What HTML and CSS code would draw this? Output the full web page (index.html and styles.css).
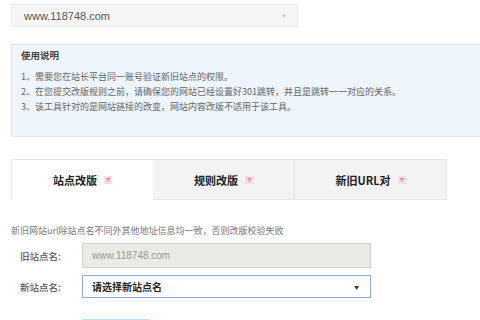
FILE: index.html
```html
<!DOCTYPE html>
<html lang="zh-CN">
  <head>
    <meta charset="UTF-8" />
    <title>网站改版</title>
    <link rel="stylesheet" href="styles.css">
  </head>
  <body>
    <div class="page">
      <!-- site picker -->
      <div class="site-select">
        <span>www.118748.com</span>
        <span class="caret">&#9660;</span>
      </div>

      <!-- usage notes -->
      <div class="notice">
        <div class="notice-title">使用说明</div>
        <p>1、需要您在站长平台同一账号验证新旧站点的权限。</p>
        <p>2、在您提交改版规则之前，请确保您的网站已经设置好301跳转，并且是跳转一一对应的关系。</p>
        <p>3、该工具针对的是网站链接的改变，网站内容改版不适用于该工具。</p>
      </div>

      <!-- tabs -->
      <div class="tabs">
        <div class="tab active">站点改版 <span class="help">?</span></div>
        <div class="tab">规则改版 <span class="help">?</span></div>
        <div class="tab wide">新旧URL对 <span class="help">?</span></div>
      </div>

      <p class="hint">新旧网站url除站点名不同外其他地址信息均一致，否则改版校验失败</p>

      <div class="form-row">
        <label>旧站点名:</label>
        <div class="field readonly">www.118748.com</div>
      </div>
      <div class="form-row">
        <label>新站点名:</label>
        <div class="field chooser">
          <span>请选择新站点名</span>
          <span class="arrow">&#9660;</span>
        </div>
      </div>

      <div class="form-row">
        <span class="label-space"></span>
        <div class="submit"></div>
      </div>
    </div>
  </body>
</html>
```

FILE: styles.css
```css
/* page base */
body {
  margin: 0;
  background: #fff;
  overflow: hidden;
  font-family: "Liberation Sans", "Noto Sans CJK SC", sans-serif;
  color: #555;
}

.page {
  height: 320px;
  box-sizing: border-box;
  overflow: hidden;
  padding: 4px 0 0 11px;
}

/* top site picker */
.site-select {
  width: 287px;
  height: 23px;
  box-sizing: border-box;
  display: flex;
  align-items: center;
  justify-content: space-between;
  padding: 0 10px 0 12px;
  background: #f5f5f5;
  border: 1px solid #ececec;
  font-size: 11px;
  color: #555;
}

.caret {
  font-size: 6px;
  color: #c8c8c8;
}

/* usage notes */
.notice {
  margin-top: 17px;
  height: 93px;
  box-sizing: border-box;
  padding: 3px 9px 0;
  background: #eef5fc;
  border: 1px solid #dfe9f3;
  border-right: none;
  font-family: "Noto Sans CJK SC", sans-serif;
}

.notice-title {
  font-size: 9.5px;
  font-weight: bold;
  color: #444;
  line-height: 14px;
  margin-bottom: 7px;
}

.notice p {
  margin: 0;
  font-size: 9px;
  line-height: 15px;
  color: #666;
}

/* tabs */
.tabs {
  margin-top: 22px;
  display: flex;
  width: 436px;
}

.tab {
  width: 142px;
  height: 41px;
  box-sizing: border-box;
  display: flex;
  align-items: center;
  justify-content: center;
  gap: 3px;
  background: #f3f3f3;
  border: 1px solid #e6e6e6;
  border-left: none;
  font-family: "Noto Sans CJK SC", sans-serif;
  font-size: 11px;
  font-weight: bold;
  color: #222;
}

.tab.active {
  background: #fff;
  border-left: 1px solid #ececec;
  border-bottom: none;
  border-right: none;
}

.tab.wide {
  width: 152px;
}

.help {
  display: inline-block;
  width: 8px;
  height: 8px;
  background: #fbdde1;
  color: #e04858;
  font-size: 6px;
  line-height: 8px;
  text-align: center;
  font-family: "Liberation Sans", sans-serif;
  margin-left: 4px;
}

.hint {
  margin: 24px 0 5px;
  font-family: "Noto Sans CJK SC", sans-serif;
  font-size: 9px;
  line-height: 14px;
  color: #777;
}

/* form */
.form-row {
  display: flex;
  align-items: center;
  margin-bottom: 7px;
}

.form-row label,
.label-space {
  width: 71px;
  box-sizing: border-box;
  padding-left: 9px;
  font-family: "Noto Sans CJK SC", sans-serif;
  font-size: 9.5px;
  font-weight: 500;
  color: #555;
}

.field {
  width: 289px;
  box-sizing: border-box;
  display: flex;
  align-items: center;
  padding: 0 11px 0 9px;
  font-size: 10px;
}

.readonly {
  height: 25px;
  background: #ebebe6;
  border: 1px solid #d2d2cc;
  color: #999;
}

.chooser {
  height: 23px;
  justify-content: space-between;
  background: #fff;
  border: 1px solid #8fa9d8;
  font-family: "Noto Sans CJK SC", sans-serif;
  font-weight: bold;
  color: #222;
}

.arrow {
  font-size: 5px;
  color: #333;
}

.submit {
  margin-top: 14px;
  width: 66px;
  height: 20px;
  background: #d8eefc;
  border: 1px solid #b8e0fa;
}
```
